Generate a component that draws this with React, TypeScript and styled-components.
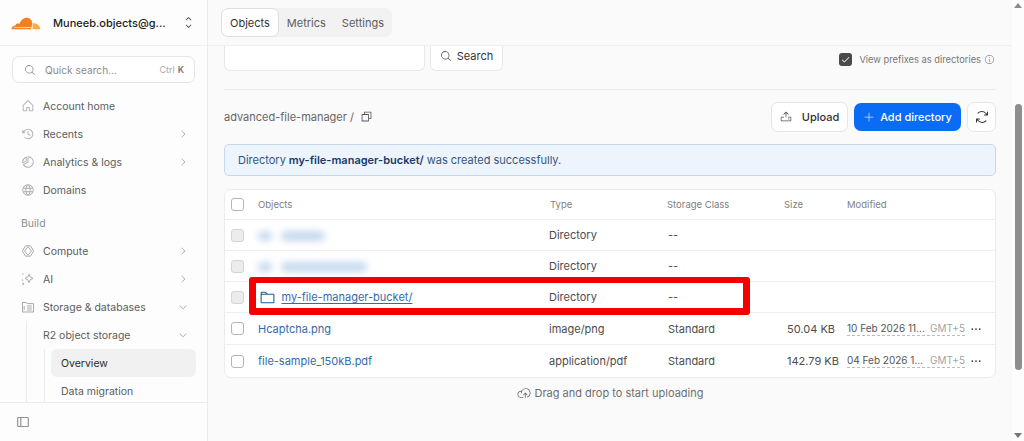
import React from "react";
import styled, { createGlobalStyle } from "styled-components";
import {
  PiHouse, PiClockCounterClockwise, PiChartPieSlice, PiGlobe, PiCaretRight, PiCaretDown,
  PiCaretUpDown, PiMagnifyingGlass, PiCopy, PiUpload, PiPlus, PiArrowsClockwise, PiCheckBold,
  PiInfo, PiFolder, PiSidebarSimple, PiDotsThreeBold, PiCloudArrowUp,
} from "react-icons/pi";

const Global = createGlobalStyle`
  html, body { margin: 0; padding: 0; height: 441px; overflow: hidden; background: #fafafa; }
  * { box-sizing: border-box; }
  body { font-family: Inter, "Liberation Sans", sans-serif; color: #36393a; }
`;

const Page = styled.div`
  display: flex;
  width: 1024px;
  height: 441px;
  overflow: hidden;
`;

const Sidebar = styled.aside`
  width: 208px;
  flex: none;
  display: flex;
  flex-direction: column;
  background: #fdfdfd;
  border-right: 1px solid #ececec;
`;

const Account = styled.div`
  height: 46px;
  flex: none;
  display: flex;
  align-items: center;
  padding: 0 12px 0 11px;
  border-bottom: 1px solid #f0f0f0;
  font-size: 11px;
  font-weight: 500;
  color: #1d1d1d;
  svg { flex: none; }
`;

const AccountName = styled.span`
  margin-left: 12px;
  flex: 1;
  white-space: nowrap;
`;

const SideScroll = styled.div`
  flex: 1;
  min-height: 0;
  overflow: hidden;
  padding: 10px 12px 0;
`;

const QuickSearch = styled.div`
  height: 27px;
  display: flex;
  align-items: center;
  padding: 0 10px 0 11px;
  background: #fff;
  border: 1px solid #e6e6e6;
  border-radius: 7px;
  font-size: 10.2px;
  color: #8c8c8c;
  margin-bottom: 9px;
`;

const QuickText = styled.span`
  margin-left: 9px;
  flex: 1;
`;

const Kbd = styled.span`
  font-size: 9px;
  color: #a8a8a8;
  b { color: #777; font-weight: 600; margin-left: 3px; }
`;

const NavRow = styled.div<{ $indent?: number }>`
  height: 28px;
  display: flex;
  align-items: center;
  font-size: 10.5px;
  color: #5c5c5c;
  padding: 0 7px 0 ${(p) => p.$indent ?? 9}px;
`;

const NavIcon = styled.span`
  width: 22px;
  flex: none;
  display: flex;
  color: #ababab;
  font-size: 14px;
`;

const NavLabel = styled.span`
  flex: 1;
  white-space: nowrap;
`;

const NavCaret = styled.span`
  display: flex;
  color: #9b9b9b;
  font-size: 10px;
`;

const GroupTitle = styled.div`
  height: 33px;
  padding: 13px 0 0 9px;
  line-height: 14px;
  font-size: 10.5px;
  color: #8f8f8f;
`;

const Tree = styled.div`
  margin-left: 14px;
  border-left: 1px solid #ececec;
`;

const SubTree = styled.div`
  margin-left: 17px;
  border-left: 1px solid #ececec;
  padding-left: 6px;
  margin-right: -1px;
`;

const SubItem = styled.div<{ $active?: boolean }>`
  height: 28px;
  display: flex;
  align-items: center;
  padding-left: 10px;
  border-radius: 6px;
  font-size: 10.5px;
  color: ${(p) => (p.$active ? "#2b2b2b" : "#5c5c5c")};
  background: ${(p) => (p.$active ? "#f1f1f1" : "transparent")};
`;

const SideFooter = styled.div`
  height: 39px;
  flex: none;
  display: flex;
  align-items: center;
  padding-left: 16px;
  border-top: 1px solid #ececec;
  color: #6e6e6e;
  font-size: 14px;
  background: #fdfdfd;
`;

const Main = styled.main`
  flex: 1;
  min-width: 0;
  display: flex;
  flex-direction: column;
`;

const TopBar = styled.div`
  height: 46px;
  flex: none;
  padding: 8px 0 0 13px;
  border-bottom: 1px solid #f0f0f0;
`;

const Tabs = styled.div`
  display: inline-flex;
  height: 29px;
  background: #f2f2f2;
  border-radius: 7px;
`;

const Tab = styled.div<{ $active?: boolean }>`
  display: flex;
  align-items: center;
  padding: 0 8px;
  font-size: 11px;
  color: ${(p) => (p.$active ? "#333" : "#5c5c5c")};
  background: ${(p) => (p.$active ? "#fff" : "transparent")};
  border: ${(p) => (p.$active ? "1px solid #dedede" : "none")};
  border-radius: 7px;
`;

const Content = styled.div`
  flex: 1;
  min-height: 0;
  padding: 0 16px;
`;

const FilterRow = styled.div`
  height: 44px;
  display: flex;
  align-items: flex-start;
  border-bottom: 1px solid #ececec;
`;

const FilterInput = styled.div`
  width: 201px;
  height: 25px;
  background: #fff;
  border: 1px solid #e8e8e8;
  border-top: none;
  border-radius: 0 0 6px 6px;
`;

const SearchButton = styled.div`
  width: 73px;
  height: 25px;
  margin-left: 5px;
  padding-bottom: 4px;
  display: flex;
  align-items: center;
  justify-content: center;
  gap: 5px;
  background: #fff;
  border: 1px solid #e8e8e8;
  border-top: none;
  border-radius: 0 0 6px 6px;
  font-size: 11px;
  color: #333;
  svg { font-size: 12px; color: #555; }
`;

const PrefixToggle = styled.div`
  margin-left: auto;
  height: 27px;
  padding-right: 1px;
  display: flex;
  align-items: center;
  font-size: 9.3px;
  color: #777;
  svg.info { font-size: 11px; margin-left: 3px; color: #8a8a8a; }
`;

const DarkCheck = styled.span`
  width: 13px;
  height: 13px;
  margin-right: 7px;
  display: flex;
  align-items: center;
  justify-content: center;
  background: #4a4a4a;
  border-radius: 3px;
  color: #fff;
  font-size: 9px;
`;

const PathRow = styled.div`
  height: 54px;
  display: flex;
  align-items: center;
  padding-bottom: 1px;
`;

const Crumb = styled.div`
  flex: 1;
  display: flex;
  align-items: center;
  font-size: 11px;
  color: #666;
  svg { margin-left: 6px; font-size: 13px; color: #555; }
`;

const Button = styled.div<{ $primary?: boolean; $w: number }>`
  width: ${(p) => p.$w}px;
  height: ${(p) => (p.$primary ? 28 : 30)}px;
  margin-left: 6px;
  display: flex;
  align-items: center;
  justify-content: center;
  gap: ${(p) => (p.$primary ? 5 : 10)}px;
  border-radius: 7px;
  font-size: 11px;
  font-weight: 500;
  color: ${(p) => (p.$primary ? "#fff" : "#333")};
  background: ${(p) => (p.$primary ? "#0a6cf5" : "#fff")};
  border: ${(p) => (p.$primary ? "none" : "1px solid #e6e6e6")};
  svg { font-size: 12px; color: ${(p) => (p.$primary ? "#cfe2ff" : "#555")}; }
`;

const RefreshIcon = styled(PiArrowsClockwise)`
  && { font-size: 16px; color: #333; }
`;

const Notice = styled.div`
  height: 32px;
  display: flex;
  align-items: center;
  padding-left: 13px;
  background: #edf4fc;
  border: 1px solid #c6d9ea;
  border-radius: 5px;
  font-size: 11px;
  color: #36557d;
  b { font-weight: 600; color: #173b6c; margin: 0 3px; }
`;

const Table = styled.div`
  position: relative;
  margin-top: 13px;
  background: #fff;
  border: 1px solid #ececec;
  border-radius: 7px;
`;

const Row = styled.div<{ $h?: number; $last?: boolean }>`
  height: ${(p) => p.$h ?? 31}px;
  display: grid;
  grid-template-columns: 33px 291px 118px 117px 63px 1fr;
  align-items: center;
  border-bottom: ${(p) => (p.$last ? "none" : "1px solid #eeeeee")};
`;

const HeadCell = styled.div<{ $pad?: number }>`
  font-size: 9.5px;
  color: #808080;
  padding-left: ${(p) => p.$pad ?? 0}px;
`;

const Cell = styled.div<{ $pad?: number }>`
  font-size: 11px;
  color: #4d4d4d;
  padding-left: ${(p) => p.$pad ?? 0}px;
  white-space: nowrap;
`;

const Box = styled.span<{ $muted?: boolean }>`
  display: block;
  margin-left: 6px;
  width: 13px;
  height: 13px;
  border-radius: 3px;
  border: 1px solid ${(p) => (p.$muted ? "#d4d4d4" : "#b5b5b5")};
  background: ${(p) => (p.$muted ? "#ececec" : "#fff")};
`;

const BlurGroup = styled.span`
  display: flex;
  gap: 9px;
  margin-top: 2px;
`;

const BlurBar = styled.span<{ $w: number }>`
  display: block;
  width: ${(p) => p.$w}px;
  height: 10px;
  background: #c6d9ef;
  border-radius: 5px;
  filter: blur(3.5px);
`;

const FileLink = styled.span`
  font-size: 11px;
  color: #2f6cad;
  white-space: nowrap;
`;

const FolderLink = styled.span`
  display: flex;
  align-items: center;
  gap: 6px;
  font-size: 11px;
  color: #2f6cad;
  svg { font-size: 17px; color: #175f9f; margin-left: 0.5px; }
  u { text-underline-offset: 2px; text-decoration-thickness: 1px; }
`;

const DateCell = styled.div`
  display: flex;
  align-items: center;
  font-size: 10px;
  color: #555;
  white-space: nowrap;
`;

const DateText = styled.span`
  width: 118px;
  display: flex;
  justify-content: space-between;
  border-bottom: 1px dashed #bdbdbd;
  padding-bottom: 1px;
  i { font-style: normal; color: #a3a3a3; }
`;

const More = styled.span`
  display: flex;
  margin-left: 4px;
  font-size: 14px;
  color: #333;
`;

const Highlight = styled.div`
  position: absolute;
  left: 24px;
  top: 87px;
  width: 501px;
  height: 38px;
  border: 6px solid #f40000;
  border-left-width: 7px;
  border-right-width: 7px;
  border-bottom-width: 7px;
  border-radius: 3px;
  pointer-events: none;
`;

const DropHint = styled.div`
  height: 30px;
  display: flex;
  align-items: center;
  justify-content: center;
  gap: 4px;
  font-size: 11px;
  color: #707070;
  svg { font-size: 14px; }
`;

const Scrollbar = styled.div`
  width: 12px;
  flex: none;
  display: flex;
  flex-direction: column;
  align-items: center;
  justify-content: space-between;
  padding: 3px 0;
  background: #fdfdfd;
`;

const Arrow = styled.span<{ $down?: boolean }>`
  width: 0;
  height: 0;
  border-left: 4px solid transparent;
  border-right: 4px solid transparent;
  ${(p) => (p.$down ? "border-top: 5px solid #777;" : "border-bottom: 5px solid #8c8c8c;")}
`;

const Thumb = styled.div`
  width: 7px;
  height: 266px;
  margin-top: 96px;
  margin-bottom: auto;
  background: #8e8e8e;
  border-radius: 4px;
`;

const Logo = () => (
  <svg width="30" height="15" viewBox="0 0 30 15" aria-hidden="true">
    <path fill="#f38020" d="M0.4 14.2 C0.6 12.2 2 10.8 3.8 10.7 C4.2 10.6 4.4 10.3 4.6 10 C5.2 8.8 6.6 8.3 8 8.7 C8.4 8.8 8.6 8.6 8.8 8.3 C10 5.2 12.6 2.8 15.6 2.8 C18.6 2.8 20.6 4.8 21.2 7.4 C21.3 7.9 21.2 9 20.8 11 C20.6 12.4 20.4 13.4 20 14.2 Z" />
    <path fill="#faae40" d="M21.4 8.4 C25.6 7.8 29 10.4 29.4 14.2 L21.4 14.2 C21.6 12.8 22 10.6 21.4 8.4 Z" />
    <path fill="#fff" d="M2.6 12.2 L20.4 12 L20.2 12.7 L2.6 12.8 Z" />
  </svg>
);

const ComputeIcon = () => (
  <svg width="14" height="14" viewBox="0 0 14 14" fill="none" stroke="currentColor" strokeWidth="1">
    <path d="M4.5 1.8 H9.5 L12.6 7 L9.5 12.2 H4.5 L1.4 7 Z" />
    <path d="M7 2.6 L10.4 7 L7 11.4 L3.6 7 Z" />
  </svg>
);

const AiIcon = () => (
  <svg width="14" height="14" viewBox="0 0 14 14" fill="none" stroke="currentColor" strokeWidth="1">
    <path d="M8 2.4 L9.2 5 L12 6.4 L9.2 7.8 L8 10.6 L6.8 7.8 L4 6.4 L6.8 5 Z" />
    <circle cx="2" cy="2" r=".7" fill="currentColor" stroke="none" />
    <circle cx="1.4" cy="8" r=".7" fill="currentColor" stroke="none" />
    <path d="M2.2 10.8 V13 M1.1 11.9 H3.3" />
  </svg>
);

const StorageIcon = () => (
  <svg width="14" height="14" viewBox="0 0 14 14" fill="none" stroke="currentColor" strokeWidth="1">
    <path d="M1.5 2.5 H5 L6.2 3.6 H12.5 V12 H1.5 Z" />
    <path d="M6 6 H10.8 M6 8 H10.8 M6 10 H10.8 M3.2 6 V10" />
  </svg>
);

const Nav = ({ icon, label, caret }: { icon: React.ReactNode; label: string; caret?: "r" | "d" }) => (
  <NavRow>
    <NavIcon>{icon}</NavIcon>
    <NavLabel>{label}</NavLabel>
    {caret && <NavCaret>{caret === "r" ? <PiCaretRight /> : <PiCaretDown />}</NavCaret>}
  </NavRow>
);

export default function App() {
  return (
    <Page>
      <Global />
      <Sidebar>
        <Account>
          <Logo />
          <AccountName>Muneeb.objects@g...</AccountName>
          <PiCaretUpDown size={13} color="#444" />
        </Account>
        <SideScroll>
          <QuickSearch>
            <PiMagnifyingGlass size={12} color="#8c8c8c" />
            <QuickText>Quick search...</QuickText>
            <Kbd>Ctrl<b>K</b></Kbd>
          </QuickSearch>
          <Nav icon={<PiHouse />} label="Account home" />
          <Nav icon={<PiClockCounterClockwise />} label="Recents" caret="r" />
          <Nav icon={<PiChartPieSlice />} label="Analytics & logs" caret="r" />
          <Nav icon={<PiGlobe />} label="Domains" />
          <GroupTitle>Build</GroupTitle>
          <Nav icon={<ComputeIcon />} label="Compute" caret="r" />
          <Nav icon={<AiIcon />} label="AI" caret="r" />
          <Nav icon={<StorageIcon />} label="Storage & databases" caret="d" />
          <Tree>
            <NavRow $indent={16}>
              <NavLabel>R2 object storage</NavLabel>
              <NavCaret><PiCaretDown /></NavCaret>
            </NavRow>
            <SubTree>
              <SubItem $active>Overview</SubItem>
              <SubItem>Data migration</SubItem>
            </SubTree>
          </Tree>
        </SideScroll>
        <SideFooter><PiSidebarSimple /></SideFooter>
      </Sidebar>
      <Main>
        <TopBar>
          <Tabs>
            <Tab $active>Objects</Tab>
            <Tab>Metrics</Tab>
            <Tab>Settings</Tab>
          </Tabs>
        </TopBar>
        <Content>
          <FilterRow>
            <FilterInput />
            <SearchButton><PiMagnifyingGlass />Search</SearchButton>
            <PrefixToggle>
              <DarkCheck><PiCheckBold /></DarkCheck>
              View prefixes as directories
              <PiInfo className="info" />
            </PrefixToggle>
          </FilterRow>
          <PathRow>
            <Crumb>advanced-file-manager /<PiCopy /></Crumb>
            <Button $w={77}><PiUpload />Upload</Button>
            <Button $primary $w={107}><PiPlus />Add directory</Button>
            <Button $w={29}><RefreshIcon /></Button>
          </PathRow>
          <Notice>Directory <b>my-file-manager-bucket/</b> was created successfully.</Notice>
          <Table>
            <Row $h={30}>
              <Box />
              <HeadCell>Objects</HeadCell>
              <HeadCell $pad={1}>Type</HeadCell>
              <HeadCell>Storage Class</HeadCell>
              <HeadCell>Size</HeadCell>
              <HeadCell>Modified</HeadCell>
            </Row>
            <Row>
              <Box $muted />
              <BlurGroup><BlurBar $w={14} /><BlurBar $w={44} /></BlurGroup>
              <Cell>Directory</Cell>
              <Cell $pad={1}>--</Cell>
            </Row>
            <Row>
              <Box $muted />
              <BlurGroup><BlurBar $w={14} /><BlurBar $w={86} /></BlurGroup>
              <Cell>Directory</Cell>
              <Cell $pad={1}>--</Cell>
            </Row>
            <Row>
              <Box $muted />
              <FolderLink><PiFolder /><u>my-file-manager-bucket/</u></FolderLink>
              <Cell>Directory</Cell>
              <Cell $pad={1}>--</Cell>
            </Row>
            <Row $h={32}>
              <Box />
              <FileLink>Hcaptcha.png</FileLink>
              <Cell>image/png</Cell>
              <Cell $pad={1}>Standard</Cell>
              <Cell $pad={3}>50.04 KB</Cell>
              <DateCell>
                <DateText>10 Feb 2026 11...<i>GMT+5</i></DateText>
                <More><PiDotsThreeBold /></More>
              </DateCell>
            </Row>
            <Row $h={32} $last>
              <Box />
              <FileLink>file-sample_150kB.pdf</FileLink>
              <Cell>application/pdf</Cell>
              <Cell $pad={1}>Standard</Cell>
              <Cell $pad={3}>142.79 KB</Cell>
              <DateCell>
                <DateText>04 Feb 2026 1...<i>GMT+5</i></DateText>
                <More><PiDotsThreeBold /></More>
              </DateCell>
            </Row>
            <Highlight />
          </Table>
          <DropHint><PiCloudArrowUp />Drag and drop to start uploading</DropHint>
        </Content>
      </Main>
      <Scrollbar>
        <Arrow />
        <Thumb />
        <Arrow $down />
      </Scrollbar>
    </Page>
  );
}
